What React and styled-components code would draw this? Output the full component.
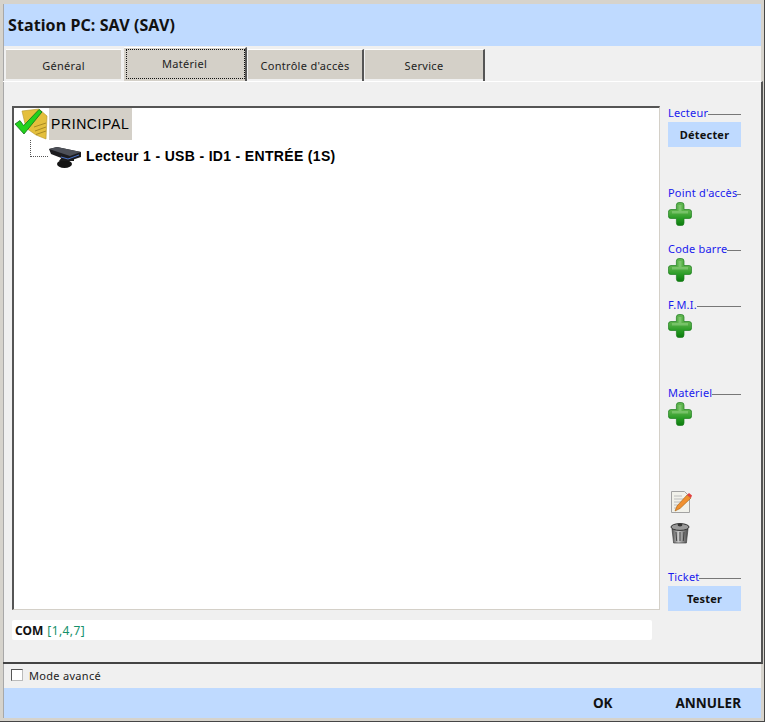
import React from "react";
import styled, { createGlobalStyle } from "styled-components";

const GlobalStyle = createGlobalStyle`
  html, body { margin: 0; padding: 0; background: #f0f0f0; }
  * { box-sizing: border-box; }
`;

const Win = styled.div`
  width: 765px;
  height: 722px;
  padding: 4px 3px 3px 3px;
  background: #d6d3cc;
  border-right: 1px solid #454545;
  border-bottom: 1px solid #454545;
  display: flex;
  font-family: "Noto Sans", sans-serif;
`;

const Inner = styled.div`
  flex: 1;
  display: flex;
  flex-direction: column;
  min-width: 0;
  background: #f0f0f0;
  border-left: 1px solid #a8a8a8;
`;

const TitleBar = styled.div`
  height: 42px;
  flex: none;
  background: #bfdaff;
  padding: 0 0 0 4px;
  display: flex;
  align-items: center;
  font-size: 16px;
  font-weight: 700;
  letter-spacing: 0.1px;
  color: #111;
`;

const TabRow = styled.div`
  height: 35px;
  flex: none;
  display: flex;
  align-items: flex-end;
  padding-left: 2px;
  gap: 1px;
`;

const Tab = styled.div`
  width: ${(p) => p.$w}px;
  height: ${(p) => (p.$active ? 34 : 32)}px;
  background: ${(p) =>
    p.$active ? "#d4d0c8" : "linear-gradient(#d4d0c8 29px, #f0f0f0 29px)"};
  border-right: 2px solid ${(p) => (p.$plain ? "#f0f0f0" : "#555")};
  border-top: 1px solid #fff;
  font-size: 11px;
  letter-spacing: 0.3px;
  color: #222;
  display: flex;
  align-items: center;
  justify-content: center;
  padding-bottom: ${(p) => (p.$active ? 3 : 1)}px;
  outline: ${(p) => (p.$active ? "1px dotted #111" : "none")};
  outline-offset: -3px;
`;

const Panel = styled.div`
  flex: 1;
  display: flex;
  flex-direction: column;
  border-top: 1px solid #fff;
  border-right: 2px solid #555;
  border-bottom: 2px solid #444;
  margin-left: -1px;
  padding: 24px 0 0 9px;
  margin-right: -2px;
`;

const Body = styled.div`
  display: flex;
  gap: 8px;
  height: 506px;
`;

const TreeBox = styled.div`
  width: 648px;
  height: 504px;
  background: #fff;
  border: 2px solid #555;
  border-right: 1px solid #d4d0c8;
  border-bottom: 1px solid #d4d0c8;
  font-family: "Liberation Sans", sans-serif;
  font-size: 14px;
  color: #000;
`;

const TreeRoot = styled.div`
  display: flex;
  height: 32px;
`;

const RootLabel = styled.div`
  background: #d4d0c8;
  padding: 0 2px;
  margin-left: 1px;
  display: flex;
  align-items: center;
  width: 83px;
  height: 32px;
  letter-spacing: 0.6px;
`;

const TreeChild = styled.div`
  display: flex;
  align-items: center;
  height: 32px;
  padding-left: 16px;
`;

const Connector = styled.span`
  align-self: flex-start;
  width: 18px;
  height: 17px;
  border-left: 1px dotted #555;
  border-bottom: 1px dotted #555;
`;

const ChildLabel = styled.span`
  margin-left: 4px;
  font-weight: 700;
  letter-spacing: 0.33px;
`;

const Side = styled.div`
  width: 73px;
  margin-top: -1px;
  display: flex;
  flex-direction: column;
`;

const Group = styled.div`
  margin-top: ${(p) => p.$top || 0}px;
`;

const Legend = styled.div`
  display: flex;
  align-items: center;
  height: 14px;
  font-size: 11px;
  letter-spacing: 0.2px;
  color: #1a1aee;
  white-space: nowrap;

  &::after {
    content: "";
    flex: 1;
    height: 1px;
    margin-top: 4px;
    background: #777;
  }
`;

const SideBtn = styled.div`
  width: 73px;
  height: 25px;
  margin-top: 3px;
  background: #bfdaff;
  display: flex;
  align-items: center;
  justify-content: center;
  font-size: 11px;
  font-weight: 700;
  letter-spacing: 0.2px;
  color: #111;
`;

const IconSlot = styled.div`
  height: ${(p) => p.$h || 24}px;
  margin-top: ${(p) => p.$top || 0}px;
  padding-left: ${(p) => p.$left || 0}px;
  display: flex;
  align-items: center;
`;

const ComBar = styled.div`
  width: 640px;
  height: 20px;
  margin-top: 8px;
  background: #fff;
  border-radius: 2px;
  padding-left: 3px;
  display: flex;
  align-items: center;
  gap: 4px;
  font-size: 12px;
`;

const ComKey = styled.b`
  color: #111;
`;

const ComValue = styled.span`
  color: #14906a;
  letter-spacing: 0.4px;
`;

const OptRow = styled.div`
  height: 24px;
  flex: none;
  display: flex;
  align-items: center;
  padding: 0 0 2px 7px;
  gap: 6px;
  font-size: 11px;
  letter-spacing: 0.3px;
  color: #222;
`;

const Check = styled.span`
  width: 12px;
  height: 12px;
  background: #fff;
  border: 1px solid #555;
  border-right-color: #bbb;
  border-bottom-color: #bbb;
`;

const Footer = styled.div`
  height: 30px;
  flex: none;
  background: #bfdaff;
  display: flex;
  align-items: center;
  justify-content: flex-end;
  padding-right: 20px;
  gap: 63px;
  font-size: 13.5px;
  font-weight: 700;
  color: #111;
`;

function Plus() {
  return (
    <svg width="24" height="24" viewBox="0 0 24 24">
      <defs>
        <linearGradient id="pl" gradientUnits="userSpaceOnUse" x1="0" y1="0" x2="0" y2="24">
          <stop offset="0" stopColor="#5fb54f" />
          <stop offset="0.4" stopColor="#58b048" />
          <stop offset="0.7" stopColor="#259a22" />
          <stop offset="1" stopColor="#0a780c" />
        </linearGradient>
      </defs>
      <path
        d="M11 0.5h2.4a2.6 2.6 0 0 1 2.6 2.6V7.5h5a2.6 2.6 0 0 1 2.6 2.6v3.8a2.6 2.6 0 0 1-2.6 2.6h-5v4.4a2.6 2.6 0 0 1-2.6 2.6H11a2.6 2.6 0 0 1-2.6-2.6v-4.4H3a2.6 2.6 0 0 1-2.6-2.6v-3.8A2.6 2.6 0 0 1 3 7.5h5.4V3.1A2.6 2.6 0 0 1 11 0.5z"
        fill="url(#pl)"
        stroke="#1c7d1e"
        strokeWidth="0.7"
      />
      <path d="M10.5 3h3v6h6.5v2.5h-16V9h6.5z" fill="#93d485" opacity="0.55" />
    </svg>
  );
}

function FolderCheck() {
  return (
    <svg width="34" height="32" viewBox="0 0 34 32">
      <path d="M8 3l17-2 8 7-1 23-10-4-10-7z" fill="#e4bf3c" stroke="#b6962a" strokeWidth="0.6" />
      <path d="M20 19l12-4M21 23l11-4M22 26.5l10-3.5" stroke="#a98a22" strokeWidth="1" fill="none" />
      <path d="M1 16l5-3.4 3.6 5L25 1.5l3 2.4L10 26z" fill="#22d21c" stroke="#14701a" strokeWidth="0.8" />
    </svg>
  );
}

function Reader() {
  return (
    <svg width="34" height="30" viewBox="0 0 34 30">
      <ellipse cx="16.5" cy="23" rx="7.5" ry="4" fill="#141414" />
      <path d="M14 16h12v4H11z" fill="#1b1b1b" />
      <path d="M1 8l8-2 24 5v5L21 20 3 13z" fill="#1c1c1f" />
      <path d="M1 8l8-2 24 5-11 4z" fill="#4d5058" />
      <path d="M13 16l7 2 11-4" stroke="#4a73c9" strokeWidth="1" fill="none" />
    </svg>
  );
}

function Note() {
  return (
    <svg width="22" height="22" viewBox="0 0 22 22">
      <path d="M1.5 0.5h13l5 5v16h-18z" fill="#f1f1ea" stroke="#a2a2a2" />
      <path d="M4 5h8M4 8h11M4 11h8M4 14h6M4 17h5" stroke="#bcbcbc" />
      <path d="M5 20l2-5L17 4l4 3L10 17.5z" fill="#f09030" stroke="#a3600f" strokeWidth="0.6" />
      <path d="M17 4l2-2 3 2.5L21 7z" fill="#e24040" />
    </svg>
  );
}

function Trash() {
  return (
    <svg width="20" height="22" viewBox="0 0 20 22">
      <defs>
        <linearGradient id="tr" x1="0" y1="0" x2="1" y2="0">
          <stop offset="0" stopColor="#555" />
          <stop offset="0.4" stopColor="#c9c9c9" />
          <stop offset="1" stopColor="#4a4a4a" />
        </linearGradient>
      </defs>
      <path d="M2 7h16l-1.6 14H3.6z" fill="url(#tr)" stroke="#333" strokeWidth="0.6" />
      <path d="M6 10l.7 9M10 10v9M14 10l-.7 9" stroke="#444" />
      <ellipse cx="10" cy="5" rx="9" ry="3.4" fill="#9a9a9a" stroke="#333" />
      <ellipse cx="10" cy="3" rx="2.4" ry="1.4" fill="#333" />
    </svg>
  );
}

export default function App() {
  return (
    <>
      <GlobalStyle />
      <Win>
        <Inner>
          <TitleBar>Station PC: SAV (SAV)</TitleBar>
          <TabRow>
            <Tab $w={117} $plain>Général</Tab>
            <Tab $w={123} $active>Matériel</Tab>
            <Tab $w={116}>Contrôle d'accès</Tab>
            <Tab $w={120}>Service</Tab>
          </TabRow>
          <Panel>
            <Body>
              <TreeBox>
                <TreeRoot>
                  <FolderCheck />
                  <RootLabel>PRINCIPAL</RootLabel>
                </TreeRoot>
                <TreeChild>
                  <Connector />
                  <Reader />
                  <ChildLabel>Lecteur 1 - USB - ID1 - ENTRÉE (1S)</ChildLabel>
                </TreeChild>
              </TreeBox>
              <Side>
                <Group>
                  <Legend>Lecteur</Legend>
                  <SideBtn>Détecter</SideBtn>
                </Group>
                <Group $top={38}>
                  <Legend>Point d'accès</Legend>
                  <IconSlot $top={3}><Plus /></IconSlot>
                </Group>
                <Group $top={15}>
                  <Legend>Code barre</Legend>
                  <IconSlot $top={3}><Plus /></IconSlot>
                </Group>
                <Group $top={15}>
                  <Legend>F.M.I.</Legend>
                  <IconSlot $top={3}><Plus /></IconSlot>
                </Group>
                <Group $top={47}>
                  <Legend>Matériel</Legend>
                  <IconSlot $top={3}><Plus /></IconSlot>
                </Group>
                <IconSlot $top={65} $h={22} $left={2}><Note /></IconSlot>
                <IconSlot $top={9} $h={22} $left={2}><Trash /></IconSlot>
                <Group $top={25}>
                  <Legend>Ticket</Legend>
                  <SideBtn>Tester</SideBtn>
                </Group>
              </Side>
            </Body>
            <ComBar>
              <ComKey>COM</ComKey>
              <ComValue>[1,4,7]</ComValue>
            </ComBar>
          </Panel>
          <OptRow>
            <Check />
            Mode avancé
          </OptRow>
          <Footer>
            <span>OK</span>
            <span>ANNULER</span>
          </Footer>
        </Inner>
      </Win>
    </>
  );
}
